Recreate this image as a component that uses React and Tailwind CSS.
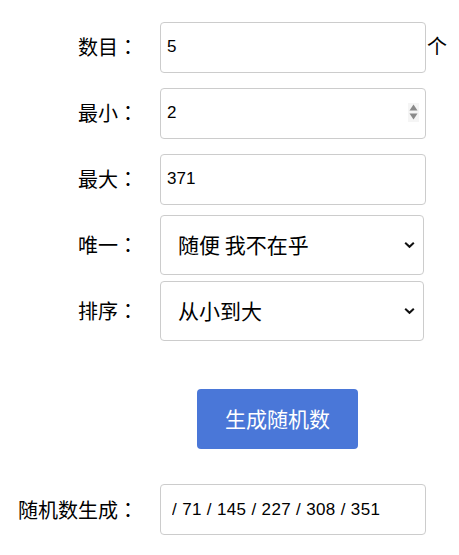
import { useState } from 'react'

const cjk = { fontFamily: '"Noto Sans CJK SC", "Liberation Sans", sans-serif' }
const colonFont = { fontFamily: '"Noto Sans CJK TC", sans-serif' }
const latin = { fontFamily: '"Liberation Sans", Arial, "Noto Sans CJK SC", sans-serif' }

function Label({ children }) {
  return (
    <label className="text-right text-[20px] leading-none text-black" style={cjk}>
      {children}
      <span style={colonFont}>：</span>
    </label>
  )
}

function Chevron() {
  return (
    <svg className="pointer-events-none absolute right-[9px] top-1/2 -translate-y-1/2" width="11" height="7" viewBox="0 0 11 7">
      <path d="M1.2 1.2 L5.5 5.3 L9.8 1.2" fill="none" stroke="#111" strokeWidth="2" />
    </svg>
  )
}

function Select({ value, options, onChange }) {
  return (
    <div className="relative w-[264px]">
      <select
        value={value}
        onChange={(e) => onChange(e.target.value)}
        className="h-[60px] w-full appearance-none rounded-[4px] border border-[#cccccc] bg-white pl-[17px] pr-8 text-[21px] text-black outline-none"
        style={cjk}
      >
        {options.map((o) => (
          <option key={o}>{o}</option>
        ))}
      </select>
      <Chevron />
    </div>
  )
}

export default function App() {
  const [count, setCount] = useState('5')
  const [min, setMin] = useState('2')
  const [max, setMax] = useState('371')
  const [unique, setUnique] = useState('随便 我不在乎')
  const [order, setOrder] = useState('从小到大')

  const inputCls =
    'h-[51px] w-[266px] rounded-[4px] border border-[#cccccc] bg-white pl-[6px] text-[17px] text-black outline-none'

  return (
    <div className="h-[555px] w-[459px] bg-white">
      <div className="grid grid-cols-[138px_266px] items-center gap-x-[22px] pt-[14px]">
        <div className="flex h-[66px] items-center justify-end">
          <Label>数目</Label>
        </div>
        <div className="relative">
          <input value={count} onChange={(e) => setCount(e.target.value)} className={inputCls} style={latin} />
          <span className="absolute left-[267px] top-[14px] text-[20px] leading-none text-black" style={cjk}>
            个
          </span>
        </div>

        <div className="flex h-[66px] items-center justify-end">
          <Label>最小</Label>
        </div>
        <div className="relative">
          <input value={min} onChange={(e) => setMin(e.target.value)} className={inputCls} style={latin} />
          {/* spinner */}
          <div className="pointer-events-none absolute left-[248px] top-[15px] flex h-[19px] w-[11px] flex-col items-center justify-center gap-[2px] bg-[#f5f5f5]">
            <svg width="9" height="7" viewBox="0 0 9 7">
              <path d="M4.5 0.5 L8.5 6.5 L0.5 6.5 Z" fill="#8a8a8a" />
            </svg>
            <svg width="9" height="7" viewBox="0 0 9 7">
              <path d="M0.5 0.5 L8.5 0.5 L4.5 6.5 Z" fill="#8a8a8a" />
            </svg>
          </div>
        </div>

        <div className="flex h-[66px] items-center justify-end">
          <Label>最大</Label>
        </div>
        <div>
          <input value={max} onChange={(e) => setMax(e.target.value)} className={inputCls} style={latin} />
        </div>

        <div className="flex h-[66px] items-center justify-end">
          <Label>唯一</Label>
        </div>
        <Select value={unique} onChange={setUnique} options={['随便 我不在乎', '是', '否']} />

        <div className="flex h-[66px] items-center justify-end">
          <Label>排序</Label>
        </div>
        <Select value={order} onChange={setOrder} options={['从小到大', '从大到小', '不排序']} />
      </div>

      <div className="mt-[45px] pl-[197px]">
        <button
          type="button"
          className="h-[60px] w-[161px] rounded-[4px] bg-[#4a77d8] text-[21px] text-white"
          style={cjk}
        >
          生成随机数
        </button>
      </div>

      <div className="mt-[35px] grid grid-cols-[138px_266px] items-center gap-x-[22px]">
        <div className="flex justify-end">
          <Label>随机数生成</Label>
        </div>
        <input
          readOnly
          value="/ 71 / 145 / 227 / 308 / 351"
          className="h-[51px] w-[266px] rounded-[4px] border border-[#cccccc] bg-white pl-[11px] text-[17px] tracking-[0.35px] text-black outline-none"
          style={latin}
        />
      </div>
    </div>
  )
}
